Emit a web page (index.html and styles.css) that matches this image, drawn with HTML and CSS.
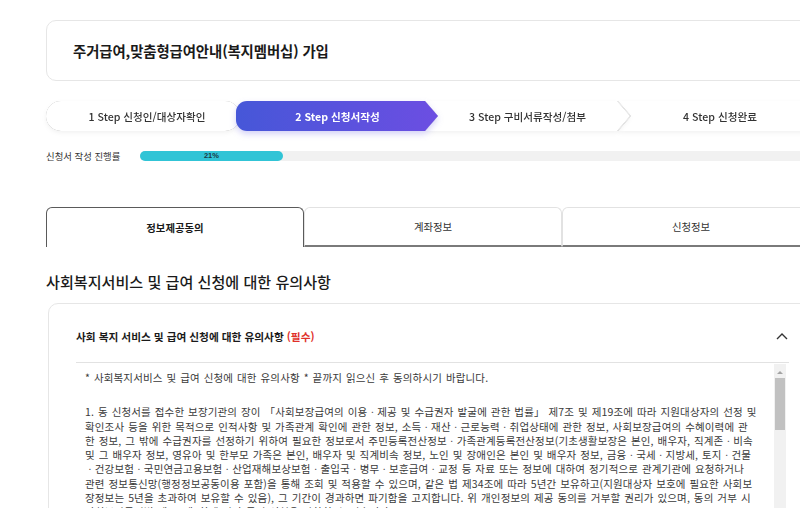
FILE: index.html
```html
<!DOCTYPE html>
<html lang="ko">
<head>
<meta charset="utf-8">
<title>주거급여 가입</title>
<link rel="stylesheet" href="styles.css">
</head>
<body>
<div class="page">
  <div class="title-box">
    <h1 class="title">주거급여,맞춤형급여안내(복지멤버십) 가입</h1>
  </div>

  <div class="steps">
    <div class="step step1"><div class="shape">1 Step 신청인/대상자확인</div></div>
    <div class="step step2"><div class="shape">2 Step 신청서작성</div></div>
    <div class="step step3"><div class="shape">3 Step 구비서류작성/첨부</div></div>
    <div class="step step4"><div class="shape">4 Step 신청완료</div></div>
  </div>

  <div class="progress-row">
    <span class="progress-label">신청서 작성 진행률</span>
    <div class="progress-track">
      <div class="progress-fill" style="width:21%">21%</div>
    </div>
  </div>

  <div class="tabs">
    <div class="tab active">정보제공동의</div>
    <div class="tab">계좌정보</div>
    <div class="tab">신청정보</div>
  </div>

  <h2 class="section-title">사회복지서비스 및 급여 신청에 대한 유의사항</h2>

  <div class="accordion">
    <div class="acc-head">
      <span class="acc-title">사회 복지 서비스 및 급여 신청에 대한 유의사항 <em class="req">(필수)</em></span>
      <svg class="chev" width="12" height="8" viewBox="0 0 12 8"><polyline points="1,7 6,2 11,7" fill="none" stroke="#333" stroke-width="1.4"/></svg>
    </div>
    <div class="acc-body">
      <div class="terms">
        <p class="line lead">* 사회복지서비스 및 급여 신청에 대한 유의사항 * 끝까지 읽으신 후 동의하시기 바랍니다.</p>
        <p class="line">1. 동 신청서를 접수한 보장기관의 장이 「사회보장급여의 이용ㆍ제공 및 수급권자 발굴에 관한 법률」 제7조 및 제19조에 따라 지원대상자의 선정 및</p>
        <p class="line">확인조사 등을 위한 목적으로 인적사항 및 가족관계 확인에 관한 정보, 소득ㆍ재산ㆍ근로능력ㆍ취업상태에 관한 정보, 사회보장급여의 수혜이력에 관</p>
        <p class="line">한 정보, 그 밖에 수급권자를 선정하기 위하여 필요한 정보로서 주민등록전산정보ㆍ가족관계등록전산정보(기초생활보장은 본인, 배우자, 직계존ㆍ비속</p>
        <p class="line">및 그 배우자 정보, 영유아 및 한부모 가족은 본인, 배우자 및 직계비속 정보, 노인 및 장애인은 본인 및 배우자 정보, 금융ㆍ국세ㆍ지방세, 토지ㆍ건물</p>
        <p class="line">ㆍ건강보험ㆍ국민연금고용보험ㆍ산업재해보상보험ㆍ출입국ㆍ병무ㆍ보훈급여ㆍ교정 등 자료 또는 정보에 대하여 정기적으로 관계기관에 요청하거나</p>
        <p class="line">관련 정보통신망(행정정보공동이용 포함)을 통해 조회 및 적용할 수 있으며, 같은 법 제34조에 따라 5년간 보유하고(지원대상자 보호에 필요한 사회보</p>
        <p class="line">장정보는 5년을 초과하여 보유할 수 있음), 그 기간이 경과하면 파기함을 고지합니다. 위 개인정보의 제공 동의를 거부할 권리가 있으며, 동의 거부 시</p>
        <p class="line">사회보장급여법 제7조제6항에 따라 급여 신청을 각하할 수 있습니다.</p>
      </div>
      <div class="scrollbar">
        <div class="sb-arrow"></div>
        <div class="sb-thumb"></div>
      </div>
    </div>
  </div>
</div>
</body>
</html>
```

FILE: styles.css
```css
html, body {
  margin: 0;
  padding: 0;
  overflow: hidden;
  background: #fff;
}
body {
  width: 800px;
  height: 508px;
  font-family: "Noto Sans CJK KR", "Noto Sans", sans-serif;
  color: #222;
}
.page {
  width: 774px;
  padding: 20px 0 0 46px;
}

/* title */
.title-box {
  height: 59px;
  border: 1px solid #e6e6e6;
  border-radius: 10px;
  display: flex;
  align-items: center;
  padding-left: 26px;
}
.title {
  margin: 0;
  font-size: 14.4px;
  font-weight: 700;
  color: #1a1a1a;
  letter-spacing: -0.1px;
}

/* steps */
.steps {
  display: flex;
  height: 30px;
  margin-top: 20px;
}
.step {
  flex: none;
  position: relative;
  filter: drop-shadow(0 0 0.6px rgba(0,0,0,0.35)) drop-shadow(0 2px 2px rgba(0,0,0,0.05));
}
.shape {
  height: 100%;
  background: #fff;
  display: flex;
  align-items: center;
  justify-content: center;
  font-size: 10.6px;
  font-weight: 500;
  color: #333;
  box-sizing: border-box;
  white-space: nowrap;
}
.step1 { width: 194px; z-index: 1; }
.step1 .shape { border-radius: 15px; padding-left: 8px; }
.step2 {
  width: 202px;
  margin-left: -4px;
  z-index: 3;
  filter: drop-shadow(0 3px 3px rgba(80,70,220,0.25));
}
.step2 .shape {
  background: linear-gradient(90deg, #4657d8, #6c4ee2);
  color: #fff;
  font-weight: 700;
  border-radius: 11px 0 0 11px;
  clip-path: polygon(0 0, calc(100% - 13px) 0, 100% 50%, calc(100% - 13px) 100%, 0 100%);
  padding-left: 14px;
  padding-right: 13px;
}
.step3 { width: 205px; margin-left: -13px; z-index: 2; }
.step3 .shape {
  clip-path: polygon(0 0, calc(100% - 13px) 0, 100% 50%, calc(100% - 13px) 100%, 0 100%, 13px 50%);
  padding: 0 13px;
}
.step4 { width: 203px; margin-left: -12px; z-index: 1; }
.step4 .shape {
  clip-path: polygon(0 0, 100% 0, 100% 100%, 0 100%, 13px 50%);
  padding: 0 12px 0 13px;
}

/* progress */
.progress-row {
  display: flex;
  align-items: center;
  margin-top: 19px;
  height: 11px;
}
.progress-label {
  width: 94px;
  font-size: 9.4px;
  color: #333;
  white-space: nowrap;
}
.progress-track {
  width: 680px;
  height: 10px;
  border-radius: 5px;
  background: #f1f1f1;
}
.progress-fill {
  height: 100%;
  border-radius: 5px;
  background: #31c4d6;
  font-size: 7.5px;
  font-weight: 700;
  color: #1c3a44;
  text-align: center;
  line-height: 10px;
  font-family: "Liberation Sans", sans-serif;
}

/* tabs */
.tabs {
  display: flex;
  margin-top: 46px;
  height: 40px;
}
.tab {
  flex: 1;
  display: flex;
  align-items: center;
  justify-content: center;
  box-sizing: border-box;
  border: 1px solid #e2e2e2;
  border-bottom: 2px solid #7a7a7a;
  border-radius: 6px 6px 0 0;
  font-size: 10.4px;
  color: #333;
}
.tab.active {
  border: 1px solid #5a5a5a;
  border-bottom: none;
  font-weight: 700;
  color: #1a1a1a;
}

/* section */
.section-title {
  margin: 24px 0 0 0;
  font-size: 15.1px;
  line-height: 20px;
  font-weight: 500;
  color: #1a1a1a;
}

.accordion {
  margin: 12px 0 0 2px;
  border: 1px solid #e6e6e6;
  border-radius: 10px;
  padding: 0 30px 0 27px;
  height: 300px;
}
.acc-head {
  height: 52px;
  padding-top: 6px;
  display: flex;
  align-items: center;
  justify-content: space-between;
  border-bottom: 1px solid #e2e2e2;
}
.acc-title {
  font-size: 10.7px;
  font-weight: 700;
  color: #1a1a1a;
  white-space: nowrap;
}
.req {
  font-style: normal;
  color: #e0302a;
}
.chev { margin-right: 1px; }

.acc-body {
  display: flex;
  height: 200px;
}
.terms {
  flex: 1;
  padding: 8px 0 0 9px;
  font-size: 10.5px;
  line-height: 14.3px;
  letter-spacing: 0.15px;
  word-spacing: 0.8px;
  color: #3a3a3a;
}
.line {
  margin: 0;
  white-space: nowrap;
}
.line.lead {
  margin-bottom: 20px;
}
.scrollbar {
  width: 12px;
  margin: 1px 3px 0 0;
  background: #f1f1f1;
  display: flex;
  flex-direction: column;
  align-items: center;
}
.sb-arrow {
  width: 0;
  height: 0;
  margin-top: 7px;
  border-left: 3px solid transparent;
  border-right: 3px solid transparent;
  border-bottom: 3px solid #a3a3a3;
}
.sb-thumb {
  width: 10px;
  height: 52px;
  margin-top: 4px;
  background: #c1c1c1;
}
```
